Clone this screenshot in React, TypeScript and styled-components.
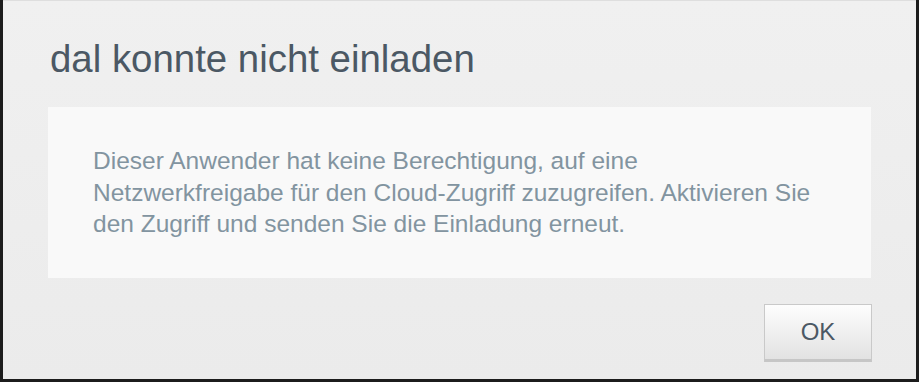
import React from 'react'
import styled, { createGlobalStyle } from 'styled-components'

const GlobalStyle = createGlobalStyle`
  html, body {
    margin: 0;
    padding: 0;
    background: #1c1c1c;
    font-family: "Liberation Sans", Arial, sans-serif;
  }
`

const Frame = styled.div`
  width: 919px;
  height: 382px;
  padding: 0 3px 3px 3px;
  box-sizing: border-box;
  background: #1c1c1c;
`

const Dialog = styled.div`
  height: 100%;
  box-sizing: border-box;
  border-top: 1px solid #dedede;
  background: linear-gradient(to bottom, #f0f0f0, #ebebeb);
  padding: 0 45px;
  display: flex;
  flex-direction: column;
`

const Title = styled.h1`
  margin: 35px 0 0 2px;
  font-size: 38.4px;
  font-weight: normal;
  line-height: 46px;
  color: #4b5864;
`

const Message = styled.div`
  margin-top: 25px;
  height: 171px;
  box-sizing: border-box;
  background: #f9f9f9;
  padding: 38px 45px 0 45px;
  font-size: 24.5px;
  line-height: 31.5px;
  color: #8294a0;
`

const Footer = styled.div`
  display: flex;
  justify-content: flex-end;
  margin-top: 26px;
`

const Button = styled.button`
  width: 108px;
  height: 58px;
  box-sizing: border-box;
  border: 1px solid #c9c9c9;
  border-bottom: 3px solid #c6c6c6;
  background: linear-gradient(to bottom, #fdfdfd, #e2e2e2);
  font-family: "Liberation Sans", Arial, sans-serif;
  font-size: 24px;
  color: #4b5864;
  padding: 0;
  margin-right: -1px;
`

export default function App() {
  return (
    <>
      <GlobalStyle />
      <Frame>
        <Dialog>
          <Title>dal konnte nicht einladen</Title>
          <Message>
            Dieser Anwender hat keine Berechtigung, auf eine
            <br />
            Netzwerkfreigabe für den Cloud-Zugriff zuzugreifen. Aktivieren Sie
            <br />
            den Zugriff und senden Sie die Einladung erneut.
          </Message>
          <Footer>
            <Button>OK</Button>
          </Footer>
        </Dialog>
      </Frame>
    </>
  )
}
